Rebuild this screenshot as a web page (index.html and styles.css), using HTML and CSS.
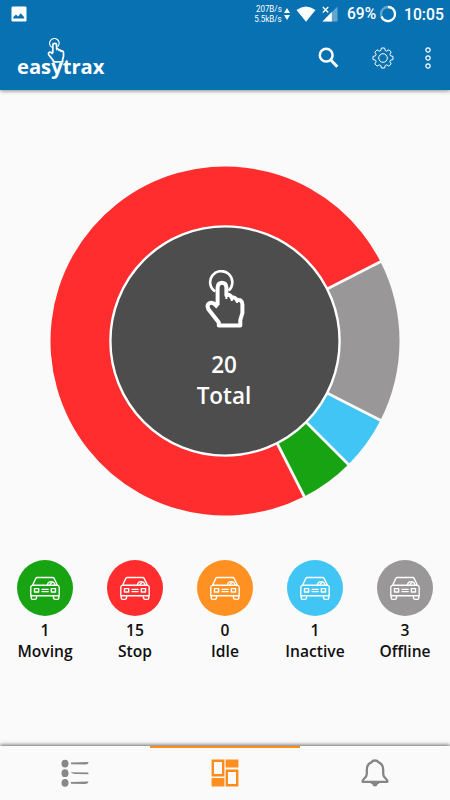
FILE: index.html
```html
<!DOCTYPE html>
<html lang="en">
<head>
<meta charset="utf-8">
<title>easytrax</title>
<link rel="stylesheet" href="styles.css">
</head>
<body>
<svg class="defs" aria-hidden="true">
  <symbol id="car" viewBox="0 0 32 26">
    <g fill="none" stroke="currentColor" stroke-width="1.35" stroke-linejoin="round" stroke-linecap="round">
      <path d="M3.6 10.2L6.8 3.4Q7.3 2.5 8.2 2.5H23.8Q24.8 2.5 25.2 3.4L28.4 10.2H3.6Q1.8 10.6 1.8 12.2V20.7H30.2V12.2Q30.2 10.6 28.4 10.2"/>
      <path d="M2.2 20.8V23Q2.2 24.3 3.6 24.3H5.8Q7.6 24.3 7.6 22V21M29.8 20.8V23Q29.8 24.3 28.4 24.3H26.2Q24.4 24.3 24.4 22V21"/>
      <path d="M18.5 10C18.8 5.4 25.4 5.4 25.8 10M21 9.3L23 7.6"/>
      <path d="M5.5 13.6H9.7V17H5.5ZM22.3 13.6H26.5V17H22.3ZM13 14.3H19.2M13 16.6H19.2"/>
    </g>
  </symbol>
  <symbol id="touch" viewBox="0 0 40 58">
    <g fill="none" stroke="currentColor" stroke-linejoin="round">
      <path stroke-width="2.6" d="M10.2 21.5A11.1 11.1 0 1 1 23.6 20.5"/>
      <path stroke-width="4" d="M12.6 35V17.2C12.6 11.2 21.4 11.2 21.4 17.2V25.2C24 24.2 26 25.4 26.8 28C29 27 31.2 28 32 30.5C35 29.3 37.4 31 37.4 34.5V43L35.3 50V55.5H13.8V52.5L3.6 39.5C0.9 34.5 4.5 31 9.2 33.8L12.6 37"/>
      <path stroke-width="2" d="M21.4 25V29M26.8 28V31M32 30.5V33"/>
    </g>
  </symbol>
</svg>
<div class="app">
  <header class="header">
    <div class="status">
      <svg class="photo" viewBox="0 0 16 16"><rect x=".5" y=".5" width="15" height="15" rx="1.3" fill="#fff"/><path d="M2.3 12.5V11L5 8.5L7 10.5L9.8 7.2L13.2 11.3V12.5Z" fill="#0871b2"/></svg>
      <div class="speed"><span>207B/s</span><span>5.5kB/s</span></div>
      <svg class="updown" viewBox="0 0 6 14"><path d="M0 6L3 1L6 6ZM0 8H6L3 13Z" fill="#fff"/></svg>
      <svg class="wifi" viewBox="0 0 20 16"><path d="M.5 4Q10-3.2 19.5 4L10 15.7Z" fill="#fff"/></svg>
      <svg class="signal" viewBox="0 0 16 16"><path d="M15.5.5V15.5H.5Z" fill="#64a5d0"/><path d="M9.8 6V15.5H.5Z" fill="#fff"/><path d="M.8 1L6.3 6.5M6.3 1L.8 6.5" stroke="#0871b2" stroke-width="3.5"/><path d="M.8 1L6.3 6.5M6.3 1L.8 6.5" stroke="#fff" stroke-width="1.3"/></svg>
      <span class="percent">69%</span>
      <svg class="battery" viewBox="0 0 18 18"><circle cx="9" cy="9" r="7" fill="none" stroke="#64a5d0" stroke-width="2.3"/><path d="M9 2A7 7 0 1 1 2.5 11.5" fill="none" stroke="#fff" stroke-width="2.3"/></svg>
      <time class="clock">10:05</time>
    </div>
    <div class="toolbar">
      <div class="logo"><span>easytrax</span><svg class="logo-touch"><use href="#touch"/></svg></div>
      <svg class="search" viewBox="0 0 22 22"><circle cx="8.2" cy="8.2" r="6.4" fill="none" stroke="#fff" stroke-width="2.5"/><path d="M12.8 13L19.3 19.8" stroke="#fff" stroke-width="3"/></svg>
      <svg class="gear" viewBox="-11 -11 22 22"><g fill="none" stroke="#fff" stroke-width="1" stroke-linejoin="round"><path d="M-2.2-7.5L-1.6-10H1.6L2.2-7.5L3.75-6.86L5.9-8.2L8.2-5.9L6.86-3.75L7.5-2.2L10-1.6V1.6L7.5 2.2L6.86 3.75L8.2 5.9L5.9 8.2L3.75 6.86L2.2 7.5L1.6 10H-1.6L-2.2 7.5L-3.75 6.86L-5.9 8.2L-8.2 5.9L-6.86 3.75L-7.5 2.2L-10 1.6V-1.6L-7.5-2.2L-6.86-3.75L-8.2-5.9L-5.9-8.2L-3.75-6.86Z"/><circle r="4.3"/></g></svg>
      <svg class="more" viewBox="0 0 6 22"><g fill="none" stroke="#fff" stroke-width="1.2"><circle cx="3" cy="3" r="2.1"/><circle cx="3" cy="11" r="2.1"/><circle cx="3" cy="19" r="2.1"/></g></svg>
    </div>
  </header>

  <main class="content">
    <div class="chart">
      <svg class="donut" viewBox="-175 -175 350 350">
        <circle r="115" fill="#fff"/>
        <path d="M0 0L79.2 155.5A174.5 174.5 0 1 1 155.5-79.2Z" fill="#ff2d2d"/>
        <path d="M0 0L155.5-79.2A174.5 174.5 0 0 1 155.5 79.2Z" fill="#999797"/>
        <path d="M0 0L155.5 79.2A174.5 174.5 0 0 1 123.4 123.4Z" fill="#40c5f4"/>
        <path d="M0 0L123.4 123.4A174.5 174.5 0 0 1 79.2 155.5Z" fill="#18a312"/>
        <path d="M0 0L156.4-79.7M0 0L156.4 79.7M0 0L124 124M0 0L79.7 156.4" stroke="#fafafa" stroke-width="2.8"/>
        <circle r="114.6" fill="#4d4d4d" stroke="#fff" stroke-width="2.4"/>
      </svg>
      <div class="total">
        <svg class="total-touch"><use href="#touch"/></svg>
        <span>20</span>
        <span>Total</span>
      </div>
    </div>
    <div class="states">
      <div class="state"><div class="disc moving"><svg><use href="#car"/></svg></div><span>1</span><span>Moving</span></div>
      <div class="state"><div class="disc stop"><svg><use href="#car"/></svg></div><span>15</span><span>Stop</span></div>
      <div class="state"><div class="disc idle"><svg><use href="#car"/></svg></div><span>0</span><span>Idle</span></div>
      <div class="state"><div class="disc inactive"><svg><use href="#car"/></svg></div><span>1</span><span>Inactive</span></div>
      <div class="state"><div class="disc offline"><svg><use href="#car"/></svg></div><span>3</span><span>Offline</span></div>
    </div>
  </main>

  <nav class="tabs">
    <div class="tab"><svg viewBox="0 0 28 28"><g fill="#888"><ellipse cx="4" cy="4.6" rx="3.5" ry="3.9"/><ellipse cx="4" cy="14.2" rx="3.5" ry="3.9"/><ellipse cx="4" cy="23.8" rx="3.5" ry="3.9"/><path d="M10 3.5L27.4 3Q28 5.3 24 5.5L10 5.2ZM9.7 13.2L27.4 13.6V15.3L16 15Q11 15 9.7 13.2ZM9.7 23L27.4 22.5Q27.5 24.7 24 24.9L10 24.7Z"/></g></svg></div>
    <div class="tab active"><svg viewBox="0 0 28 28"><g fill="none" stroke="#ff8c1a" stroke-width="2.4"><path d="M1.8 1.7H12.2V16.3H1.8ZM15.8 11.7H26.2V26.3H15.8Z"/></g><path d="M.6 19H13.4V27.5H.6ZM14.6.5H27.4V8.5H14.6Z" fill="#ff8f20"/></svg></div>
    <div class="tab"><svg viewBox="0 0 28 28"><path d="M10.8 3.2C11.6.9 16.4.9 17.2 3.2C20.8 4.4 22.2 7.5 22.2 11V15Q22.2 17.3 24.7 19.5Q26.8 21.4 26.3 22.8H1.7Q1.2 21.4 3.3 19.5Q5.8 17.3 5.8 15V11C5.8 7.5 7.2 4.4 10.8 3.2Z" fill="none" stroke="#858585" stroke-width="2.3" stroke-linejoin="round"/><path d="M9 23.5H19L17.5 25H16.8Q16.2 27.5 14 27.5T11.2 25H10.5Z" fill="#858585"/></svg></div>
  </nav>
</div>
</body>
</html>
```
FILE: styles.css
```css
* { box-sizing: border-box; }
body { margin: 0; background: #fafafa; }
svg { display: block; flex: none; }
.defs { width: 0; height: 0; position: absolute; }
.app { width: 450px; height: 800px; display: flex; flex-direction: column; overflow: hidden; font-family: "Open Sans", sans-serif; }

.header { height: 90px; background: #0871b2; color: #fff; box-shadow: 0 1px 4px rgba(0, 0, 0, .45); }
.status { height: 28px; display: flex; align-items: center; padding: 0 7px 0 11px; font-family: Roboto, sans-serif; font-weight: 500; white-space: nowrap; }
.photo { width: 16px; height: 16px; margin-right: auto; }
.speed { display: flex; flex-direction: column; align-items: flex-end; font-size: 9.5px; line-height: 10px; font-weight: 400; transform: scaleX(.84); transform-origin: right; }
.updown { width: 6px; height: 14px; margin-left: 2px; }
.wifi { width: 20px; height: 16px; margin-left: 6px; }
.signal { width: 16px; height: 16px; margin-left: 6px; }
.percent { width: 29px; margin-left: 9px; font-size: 15.6px; }
.battery { width: 18px; height: 18px; margin-left: 3px; }
.clock { width: 39px; margin-left: 7px; font-size: 15.7px; }

.toolbar { height: 62px; display: flex; align-items: center; padding: 0 19px 2px 17px; }
.logo { position: relative; margin-right: auto; padding-top: 15px; font: 700 20.2px/28px "Open Sans", sans-serif; }
.logo-touch { position: absolute; left: 30px; top: 1px; width: 18px; height: 25px; }
.search { width: 22px; height: 22px; }
.gear { width: 22px; height: 22px; margin-left: 32px; }
.more { width: 6px; height: 22px; margin-left: 31px; }

.content { flex: 1; padding-top: 75px; }
.chart { display: grid; justify-content: center; height: 350px; }
.donut, .total { grid-area: 1 / 1; }
.donut { width: 350px; height: 350px; margin-top: .5px; }
.total { display: flex; flex-direction: column; align-items: center; padding-top: 105px; color: #fff; font-size: 22.5px; line-height: 31px; font-weight: 600; margin-left: -2px; }
.total-touch { width: 40px; height: 58px; margin-bottom: 21px; margin-left: 2px; }

.states { display: grid; grid-template-columns: repeat(5, 90px); margin-top: 45px; }
.state { display: flex; flex-direction: column; align-items: center; color: #101010; font-size: 15.6px; line-height: 21px; font-weight: 600; }
.disc { width: 56px; height: 56px; margin-bottom: 4px; border-radius: 50%; display: grid; place-items: center; color: #fff; }
.disc svg { width: 32px; height: 26px; }
.moving { background: #18a312; }
.stop { background: #ff2d2d; }
.idle { background: #ff9123; }
.inactive { background: #40c5f4; }
.offline { background: #999797; }

.tabs { height: 54px; display: grid; grid-template-columns: repeat(3, 1fr); box-shadow: 0 -1px 4px rgba(0, 0, 0, .6); background: #fafafa; }
.tab { display: flex; justify-content: center; padding-top: 11px; border-top: 2.5px solid transparent; }
.tab.active { border-top-color: #ff8c1a; }
.tab svg { width: 28px; height: 28px; }
```
